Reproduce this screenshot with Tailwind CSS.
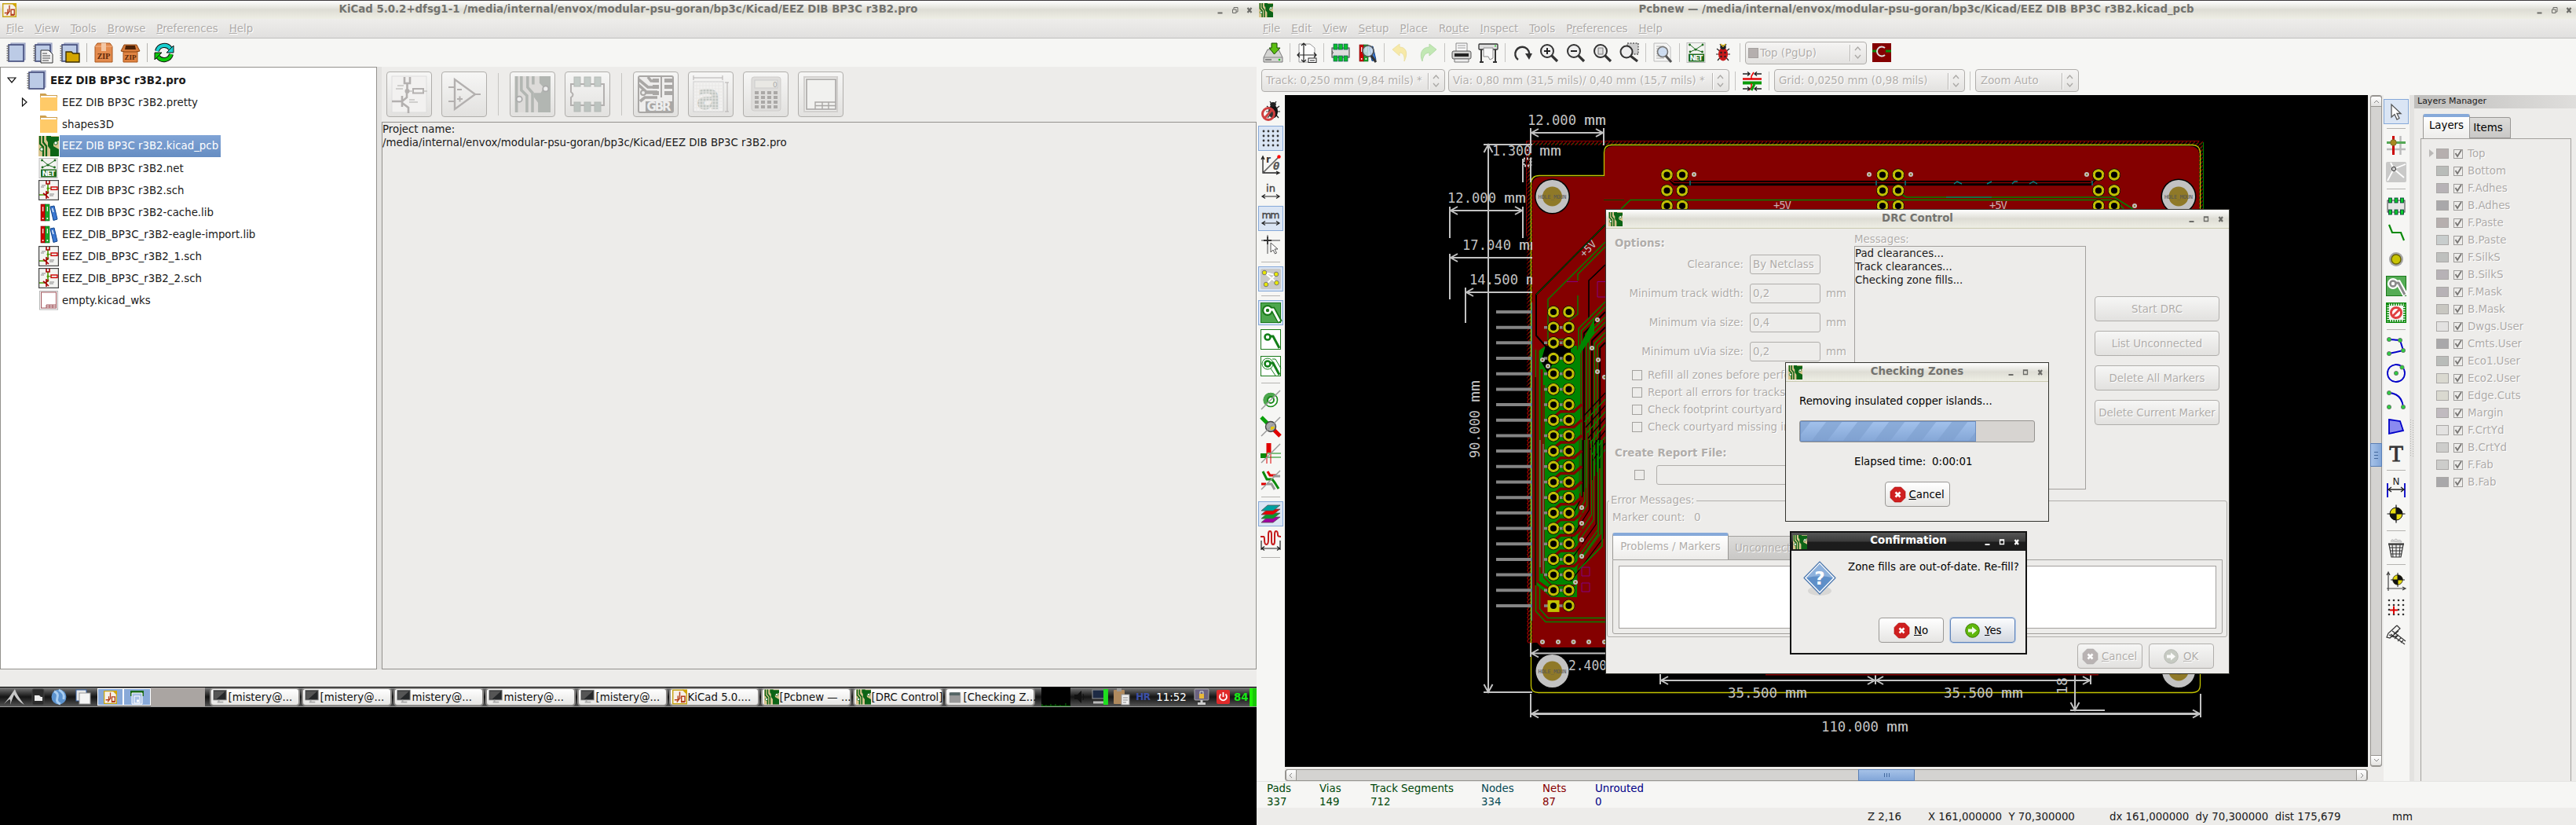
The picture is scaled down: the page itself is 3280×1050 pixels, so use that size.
<!DOCTYPE html>
<html lang="en">
<head>
<meta charset="utf-8">
<title>KiCad desktop</title>
<script src="https://cdn.jsdelivr.net/npm/@tailwindcss/browser@4"></script>
</head>
<body class="bg-black w-[3280px] h-[1050px] overflow-hidden relative whitespace-nowrap font-['DejaVu_Sans','Liberation_Sans',sans-serif] text-[13.33px] leading-[17px] text-[#1a1a1a]">
<div class="flex w-[3280px] h-[1050px]">

<!-- Project manager window and taskbar -->
<section class="w-[1600px] h-[900px] flex flex-col bg-[#edecea]">
  <header class="h-[24px] shrink-0 border-t border-[#3d393c] bg-linear-to-b from-white via-[#deddd5] to-[#eeeee4] flex items-center pl-[3px] relative">
    <i data-i="kicad" class="w-[18px] h-[18px] block"></i>
    <b class="absolute inset-x-0 text-center text-[#73736f] top-[2px]">KiCad 5.0.2+dfsg1-1 /media/internal/envox/modular-psu-goran/bp3c/Kicad/EEZ DIB BP3C r3B2.pro</b>
    <i data-i="wbmax" class="ml-auto w-[50px] h-[14px] mr-[3px] block text-[#6c6c68]"></i>
  </header>
  <nav class="h-[25px] shrink-0 bg-linear-to-b from-[#eeedeb] to-[#e1e0df] border-b border-[#c0bfbd] flex items-center gap-[14px] pl-[8px] text-[#aeaba9] [text-shadow:1px_1px_0_#fff]">
    <span><u>F</u>ile</span><span><u>V</u>iew</span><span><u>T</u>ools</span><span><u>B</u>rowse</span><span><u>P</u>references</span><span><u>H</u>elp</span>
  </nav>
  <div class="h-[36px] shrink-0 bg-[#f6f6f4] flex items-center pl-[4px]">
    <i data-i="book" class="block w-[26px] h-[26px] mx-[4px]"></i><i data-i="bookdoc" class="block w-[26px] h-[26px] mx-[4px]"></i><i data-i="bookfold" class="block w-[26px] h-[26px] mx-[4px]"></i>
    <i class="block w-px h-[24px] mx-[4px] bg-[#b5b4b1]"></i>
    <i data-i="zip" class="block w-[26px] h-[26px] mx-[4px]"></i><i data-i="unzip" class="block w-[26px] h-[26px] mx-[4px]"></i>
    <i class="block w-px h-[24px] mx-[4px] bg-[#b5b4b1]"></i>
    <i data-i="refresh" class="block w-[26px] h-[26px] mx-[4px]"></i>
  </div>
  <div class="h-[767px] flex shrink-0">
    <div id="tree" class="w-[480px] border border-[#93918d] bg-white pt-[2px]"></div>
    <div class="w-[6px] bg-[#e3e2e0]"></div>
    <div class="grow flex flex-col">
      <div class="h-[70px] flex items-center pl-[6px] gap-[12px] text-[#b2aeae]">
        <div class="w-[58px] h-[58px] border border-[#b0aeab] rounded-[4px] bg-linear-to-b from-[#f6f6f5] to-[#e2e1df] flex items-center justify-center"><i data-i="gsch" class="block w-[48px] h-[48px]"></i></div>
        <div class="w-[58px] h-[58px] border border-[#b0aeab] rounded-[4px] bg-linear-to-b from-[#f6f6f5] to-[#e2e1df] flex items-center justify-center"><i data-i="gamp" class="block w-[48px] h-[48px]"></i></div>
        <div class="w-px h-[54px] bg-[#c6c5c2] mx-[2px]"></div>
        <div class="w-[58px] h-[58px] border border-[#b0aeab] rounded-[4px] bg-linear-to-b from-[#f6f6f5] to-[#e2e1df] flex items-center justify-center"><i data-i="gpcb" class="block w-[48px] h-[48px]"></i></div>
        <div class="w-[58px] h-[58px] border border-[#b0aeab] rounded-[4px] bg-linear-to-b from-[#f6f6f5] to-[#e2e1df] flex items-center justify-center"><i data-i="gmod" class="block w-[48px] h-[48px]"></i></div>
        <div class="w-px h-[54px] bg-[#c6c5c2] mx-[2px]"></div>
        <div class="w-[58px] h-[58px] border border-[#b0aeab] rounded-[4px] bg-linear-to-b from-[#f6f6f5] to-[#e2e1df] flex items-center justify-center"><i data-i="ggbr" class="block w-[48px] h-[48px]"></i></div>
        <div class="w-[58px] h-[58px] border border-[#b0aeab] rounded-[4px] bg-linear-to-b from-[#f6f6f5] to-[#e2e1df] flex items-center justify-center"><i data-i="ga" class="block w-[48px] h-[48px]"></i></div>
        <div class="w-[58px] h-[58px] border border-[#b0aeab] rounded-[4px] bg-linear-to-b from-[#f6f6f5] to-[#e2e1df] flex items-center justify-center"><i data-i="gcalc" class="block w-[48px] h-[48px]"></i></div>
        <div class="w-[58px] h-[58px] border border-[#b0aeab] rounded-[4px] bg-linear-to-b from-[#f6f6f5] to-[#e2e1df] flex items-center justify-center"><i data-i="gpage" class="block w-[48px] h-[48px]"></i></div>
      </div>
      <div class="grow border border-[#93918d]"><div>Project name:</div><div>/media/internal/envox/modular-psu-goran/bp3c/Kicad/EEZ DIB BP3C r3B2.pro</div></div>
    </div>
  </div>
  <div class="h-[22px] shrink-0"></div>
  <footer class="h-[26px] shrink-0 border-t border-black bg-linear-to-b from-[#7b7b7b] via-[#151515] to-[#555] flex items-center border-b border-b-[#999]">
    <i data-i="lx" class="block w-[28px] h-[22px] ml-[4px]"></i><i data-i="fm" class="block w-[17px] h-[22px] ml-[8px]"></i><i data-i="globe" class="block w-[20px] h-[22px] ml-[8px]"></i><i data-i="wins" class="block w-[20px] h-[20px] ml-[11px]"></i>
    <div class="w-[33px] h-[22px] ml-[8px] bg-[#88a9d8] border border-white flex justify-center items-center"><i data-i="kicad" class="block w-[17px] h-[17px]"></i></div>
    <div class="w-[35px] h-[22px] bg-[#88a9d8] border border-white flex justify-center items-center"><i data-i="desk" class="block w-[17px] h-[19px]"></i></div>
    <div class="w-[69px] h-[24px] bg-[#aaa5a2]"></div>
    <div id="tasks" class="flex gap-[2px] ml-[6px]"></div>
    <i data-i="graph" class="block w-[37px] h-[24px] ml-[8px]"></i><i data-i="spk" class="block w-[14px] h-[20px] ml-[5px]"></i><i data-i="mon" class="block w-[22px] h-[22px] ml-[9px]"></i><i data-i="clip" class="block w-[22px] h-[22px] ml-[5px]"></i>
    <b class="text-[#3c50a8] ml-[7px] w-[26px] text-[12px] tracking-[-0.5px]">HR</b><span class="text-white w-[48px]">11:52</span>
    <i data-i="lock" class="block w-[20px] h-[22px]"></i><i data-i="power" class="block w-[17px] h-[18px] ml-[9px]"></i><b class="text-[#17e817] ml-[5px] w-[20px]">84</b><i class="block w-[4px] h-[23px] bg-[#1fef07]"></i><i class="block w-[5px] h-[23px] bg-[#1bc80a]"></i>
  </footer>
</section>

<!-- PCB editor window -->
<section class="w-[1680px] h-[1050px] flex flex-col bg-[#f6f6f4] relative">
  <header class="h-[24px] shrink-0 border-t border-[#3d393c] bg-linear-to-b from-white via-[#deddd5] to-[#eeeee4] flex items-center pl-[3px] relative">
    <i data-i="pcb" class="w-[18px] h-[18px] block"></i>
    <b class="absolute inset-x-0 text-center text-[#73736f] top-[2px]">Pcbnew — /media/internal/envox/modular-psu-goran/bp3c/Kicad/EEZ DIB BP3C r3B2.kicad_pcb</b>
    <i data-i="wbmax" class="ml-auto w-[50px] h-[14px] mr-[3px] block text-[#6c6c68]"></i>
  </header>
  <nav class="h-[25px] shrink-0 bg-linear-to-b from-[#eeedeb] to-[#e1e0df] border-b border-[#c0bfbd] flex items-center gap-[14px] pl-[8px] text-[#aeaba9] [text-shadow:1px_1px_0_#fff]">
    <span><u>F</u>ile</span><span><u>E</u>dit</span><span><u>V</u>iew</span><span><u>S</u>etup</span><span><u>P</u>lace</span><span>Ro<u>u</u>te</span><span><u>I</u>nspect</span><span><u>T</u>ools</span><span>P<u>r</u>eferences</span><span><u>H</u>elp</span>
  </nav>
  <div class="h-[36px] shrink-0 flex items-center pl-[4px]">
    <div id="tb1" class="flex items-center"></div>
    <div class="ml-[2px] w-[155px] h-[29px] border border-[#b0aeab] rounded-[4px] bg-linear-to-b from-[#f5f4f3] to-[#e3e2e0] flex items-center text-[#b2afac] [text-shadow:1px_1px_0_#fff]"><i class="block w-[13px] h-[13px] ml-[3px] bg-[#b5afae] border border-[#a5a19f]"></i><span class="ml-[2px]">Top (PgUp)</span><i data-i="combo" class="ml-auto block w-[22px] h-[24px]"></i></div>
    <i data-i="pair" class="block w-[24px] h-[24px] ml-[7px]"></i>
  </div>
  <div class="h-[36px] shrink-0 flex items-center pl-[6px] pb-px text-[#b2afac] [text-shadow:1px_1px_0_#fff]">
    <div class="w-[234px] h-[29px] border border-[#b0aeab] rounded-[4px] bg-linear-to-b from-[#f5f4f3] to-[#e3e2e0] flex items-center pl-[5px]"><span>Track: 0,250 mm (9,84 mils) *</span><i data-i="combo" class="ml-auto block w-[22px] h-[24px]"></i></div>
    <div class="ml-[4px] w-[358px] h-[29px] border border-[#b0aeab] rounded-[4px] bg-linear-to-b from-[#f5f4f3] to-[#e3e2e0] flex items-center pl-[5px]"><span>Via: 0,80 mm (31,5 mils)/ 0,40 mm (15,7 mils) *</span><i data-i="combo" class="ml-auto block w-[22px] h-[24px]"></i></div>
    <i class="block w-px h-[24px] ml-[7px] bg-[#c5c4c1]"></i><i data-i="clear" class="block w-[26px] h-[26px] mx-[8px]"></i><i class="block w-px h-[24px] bg-[#c5c4c1]"></i>
    <div class="ml-[6px] w-[243px] h-[29px] border border-[#b0aeab] rounded-[4px] bg-linear-to-b from-[#f5f4f3] to-[#e3e2e0] flex items-center pl-[5px]"><span>Grid: 0,0250 mm (0,98 mils)</span><i data-i="combo" class="ml-auto block w-[22px] h-[24px]"></i></div>
    <i class="block w-px h-[24px] ml-[6px] bg-[#c5c4c1]"></i>
    <div class="ml-[6px] w-[132px] h-[29px] border border-[#b0aeab] rounded-[4px] bg-linear-to-b from-[#f5f4f3] to-[#e3e2e0] flex items-center pl-[6px]"><span>Zoom Auto</span><i data-i="combo" class="ml-auto block w-[22px] h-[24px]"></i></div>
  </div>
  <div class="h-[873px] shrink-0 flex">
    <div id="tbl" class="w-[36px] flex flex-col items-center pt-[4px]"></div>
    <div class="w-[1399px] bg-[#edecea]">
      <div class="flex h-[855px]">
        <svg id="board" class="block w-[1379px] h-[855px] bg-black" viewBox="1636 121 1379 855"></svg>
        <div class="w-[15px] ml-[3px] border border-[#969490] rounded-[3px] bg-[#d4d3d1] flex flex-col items-center">
          <div class="w-[15px] h-[14px] border border-[#969490] rounded-t-[3px] bg-linear-to-b from-white to-[#e3e2e0] flex items-center justify-center"><i data-i="up" class="block w-[8px] h-[8px]"></i></div>
          <div class="w-[15px] h-[30px] mt-[428px] border border-[#5a7fb5] bg-linear-to-r from-[#a6c2e8] to-[#82a6d8] flex flex-col items-center justify-center gap-[3px]"><i class="block w-[5px] h-px bg-[#456a9f]"></i><i class="block w-[5px] h-px bg-[#456a9f]"></i><i class="block w-[5px] h-px bg-[#456a9f]"></i></div>
          <div class="mt-auto w-[15px] h-[14px] border border-[#969490] rounded-b-[3px] bg-linear-to-b from-white to-[#e3e2e0] flex items-center justify-center"><i data-i="dn" class="block w-[8px] h-[8px]"></i></div>
        </div>
      </div>
      <div class="mt-[3px] w-[1379px] h-[15px] border border-[#969490] rounded-[3px] bg-[#d4d3d1] flex items-center">
        <div class="w-[14px] h-[15px] border border-[#969490] rounded-l-[3px] bg-linear-to-b from-white to-[#e3e2e0] flex items-center justify-center"><i data-i="lt" class="block w-[8px] h-[8px]"></i></div>
        <div class="w-[72px] h-[15px] ml-[715px] border border-[#5a7fb5] bg-linear-to-b from-[#a6c2e8] to-[#82a6d8] flex items-center justify-center gap-[2px]"><i class="block w-px h-[5px] bg-[#456a9f]"></i><i class="block w-px h-[5px] bg-[#456a9f]"></i><i class="block w-px h-[5px] bg-[#456a9f]"></i></div>
        <div class="ml-auto w-[14px] h-[15px] border border-[#969490] rounded-r-[3px] bg-linear-to-b from-white to-[#e3e2e0] flex items-center justify-center"><i data-i="rt" class="block w-[8px] h-[8px]"></i></div>
      </div>
    </div>
    <div id="tbr" class="w-[34px] flex flex-col items-center pt-[4px] -ml-px"></div>
    <div class="w-[6px] bg-[#e3e2e0] flex items-center pl-px"><i data-i="grip" class="block w-[5px] h-[47px]"></i></div>
    <div class="grow bg-[#edecea] ">
      <div class="h-[17px] bg-linear-to-r from-[#bfbebc] to-[#dfdedc] pl-[4px] text-[11px] leading-[15px]">Layers Manager</div>
      <div class="pl-[8px] mt-[7px]">
        <div class="flex items-end h-[31px] pl-[3px]">
          <div class="w-[60px] h-[31px] border border-b-0 border-[#9a9895] border-t-4 border-t-[#86a9d9] rounded-t-[3px] bg-linear-to-b from-white to-[#edecea] text-center pt-[2px] text-black">Layers</div>
          <div class="w-[52px] h-[27px] border border-l-0 border-[#9a9895] rounded-tr-[3px] bg-linear-to-b from-[#dddcda] to-[#c9c8c6] text-center pt-[4px] pr-[5px] text-black">Items</div>
        </div>
        <div id="layers" class="w-[192px] h-[818px] border border-b-0 border-[#a3a19e] pt-[7px] pl-[13px] text-[#aeaba9] [text-shadow:1px_1px_0_#fff]"></div>
      </div>
    </div>
  </div>
  <div class="h-[34px] shrink-0 border-t border-[#e4e4e2] flex">
    <div class="pl-[13px] w-[80px] text-[#00480a]"><div>Pads</div><div>337</div></div>
    <div class="w-[65px] text-[#00480a]"><div>Vias</div><div>149</div></div>
    <div class="w-[141px] text-[#00480a]"><div>Track Segments</div><div>712</div></div>
    <div class="w-[78px] text-[#064a55]"><div>Nodes</div><div>334</div></div>
    <div class="w-[67px] text-[#860000]"><div>Nets</div><div>87</div></div>
    <div class="text-[#000086]"><div>Unrouted</div><div>0</div></div>
  </div>
  <div class="grow bg-[#edecea] flex items-center pl-[778px]">
    <span class="w-[77px]">Z 2,16</span><span class="w-[231px]">X 161,000000&nbsp; Y 70,300000</span><span class="w-[360px]">dx 161,000000&nbsp; dy 70,300000&nbsp; dist 175,679</span><span>mm</span>
  </div>
</section>
</div>

<!-- DRC dialog -->
<section class="absolute left-[2044px] top-[266px] w-[795px] h-[592px] border border-[#34342f] bg-[#edecea] text-[#b0adaa] [text-shadow:1px_1px_0_#fff] flex flex-col">
  <header class="h-[24px] shrink-0 border-b border-[#c9c9af] bg-linear-to-b from-white via-[#deddd5] to-[#eeeee4] flex items-center pl-[3px] relative [text-shadow:none]">
    <i data-i="pcb" class="w-[18px] h-[18px] block"></i><b class="absolute inset-x-0 text-center text-[#73736f] top-[2px]">DRC Control</b><i data-i="wb" class="ml-auto w-[50px] h-[14px] mr-[4px] block text-[#6c6c68]"></i>
  </header>
  <div class="flex h-[332px] shrink-0">
    <div class="w-[316px] pt-[10px] pl-[11px] shrink-0">
      <b class="block h-[17px]">Options:</b>
      <div class="h-[37px] flex items-center"><span class="w-[164px] text-right">Clearance:</span><div class="ml-[8px] w-[90px] h-[25px] border border-[#b0aeab] rounded-[3px] pl-[3px] pt-[3px]">By Netclass</div></div>
      <div class="h-[37px] flex items-center"><span class="w-[164px] text-right">Minimum track width:</span><div class="ml-[8px] w-[90px] h-[25px] border border-[#b0aeab] rounded-[3px] pl-[3px] pt-[3px]">0,2</div><span class="ml-[7px]">mm</span></div>
      <div class="h-[37px] flex items-center"><span class="w-[164px] text-right">Minimum via size:</span><div class="ml-[8px] w-[90px] h-[25px] border border-[#b0aeab] rounded-[3px] pl-[3px] pt-[3px]">0,4</div><span class="ml-[7px]">mm</span></div>
      <div class="h-[37px] flex items-center"><span class="w-[164px] text-right">Minimum uVia size:</span><div class="ml-[8px] w-[90px] h-[25px] border border-[#b0aeab] rounded-[3px] pl-[3px] pt-[3px]">0,2</div><span class="ml-[7px]">mm</span></div>
      <div class="h-[22px] flex items-center pl-[22px] gap-[7px]"><i class="block w-[13px] h-[13px] border border-[#a3a19e]"></i><span>Refill all zones before performing</span></div>
      <div class="h-[22px] flex items-center pl-[22px] gap-[7px]"><i class="block w-[13px] h-[13px] border border-[#a3a19e]"></i><span>Report all errors for tracks (slow)</span></div>
      <div class="h-[22px] flex items-center pl-[22px] gap-[7px]"><i class="block w-[13px] h-[13px] border border-[#a3a19e]"></i><span>Check footprint courtyard overlap</span></div>
      <div class="h-[22px] flex items-center pl-[22px] gap-[7px]"><i class="block w-[13px] h-[13px] border border-[#a3a19e]"></i><span>Check courtyard missing in fp</span></div>
      <b class="block h-[17px] mt-[14px]">Create Report File:</b>
      <div class="flex items-center h-[25px] mt-[7px] pl-[25px]"><i class="block w-[13px] h-[13px] border border-[#a3a19e]"></i><div class="ml-[15px] w-[220px] h-[25px] border border-[#b0aeab] rounded-[3px]"></div></div>
    </div>
    <div class="w-[295px] pt-[5px] shrink-0"><div>Messages:</div>
      <div class="w-[295px] h-[310px] border border-[#a3a19e] text-[#1a1a1a] [text-shadow:none]"><div>Pad clearances...</div><div>Track clearances...</div><div>Checking zone fills...</div></div></div>
    <div class="pt-[86px] pl-[11px] flex flex-col gap-[12px]">
      <div class="w-[159px] h-[32px] border border-[#b0aeab] rounded-[4px] bg-linear-to-b from-[#f6f6f5] to-[#e2e1df] text-center pt-[7px]">Start DRC</div>
      <div class="w-[159px] h-[32px] border border-[#b0aeab] rounded-[4px] bg-linear-to-b from-[#f6f6f5] to-[#e2e1df] text-center pt-[7px]">List Unconnected</div>
      <div class="w-[159px] h-[32px] border border-[#b0aeab] rounded-[4px] bg-linear-to-b from-[#f6f6f5] to-[#e2e1df] text-center pt-[7px]">Delete All Markers</div>
      <div class="w-[159px] h-[32px] border border-[#b0aeab] rounded-[4px] bg-linear-to-b from-[#f6f6f5] to-[#e2e1df] text-center pt-[7px]">Delete Current Marker</div>
    </div>
  </div>
  <div class="mt-[14px] ml-[1px] w-[790px] h-[174px] border border-[#b0aeab] rounded-[3px] shrink-0 relative pl-[6px]">
    <div class="absolute left-[2px] top-[-10px] bg-[#edecea] px-[2px]">Error Messages:</div>
    <div class="mt-[12px] h-[17px] flex"><span class="w-[104px]">Marker count:</span><span>0</span></div>
    <div class="flex items-end h-[34px] mt-[11px]">
      <div class="w-[148px] h-[34px] border border-b-0 border-[#9a9895] border-t-4 border-t-[#86a9d9] rounded-t-[3px] bg-linear-to-b from-white to-[#edecea] text-center pt-[5px]">Problems / Markers</div>
      <div class="w-[200px] h-[30px] border border-l-0 border-b-0 border-[#a3a19e] bg-linear-to-b from-[#dddcda] to-[#c9c8c6] pl-[8px] pt-[6px]">Unconnected Items</div>
    </div>
    <div class="w-[777px] h-[95px] border border-[#a3a19e] rounded-b-[3px] p-[7px]"><div class="w-full h-[80px] border border-[#a3a19e] bg-white"></div></div>
  </div>
  <div class="flex justify-end gap-[8px] mt-[8px] pr-[19px]">
    <div class="w-[83px] h-[32px] border border-[#b0aeab] rounded-[4px] bg-linear-to-b from-[#f6f6f5] to-[#e2e1df] flex items-center pl-[5px] gap-[4px]"><i data-i="gno" class="block w-[21px] h-[21px]"></i><span><u>C</u>ancel</span></div>
    <div class="w-[83px] h-[32px] border border-[#b0aeab] rounded-[4px] bg-linear-to-b from-[#f6f6f5] to-[#e2e1df] flex items-center pl-[17px] gap-[5px]"><i data-i="gok" class="block w-[21px] h-[21px]"></i><span><u>O</u>K</span></div>
  </div>
</section>

<!-- Progress dialog -->
<section class="absolute left-[2273px] top-[461px] w-[336px] h-[203px] border border-[#34342f] bg-[#edecea] flex flex-col">
  <header class="h-[24px] shrink-0 border-b border-[#c9c9af] bg-linear-to-b from-white via-[#deddd5] to-[#eeeee4] flex items-center pl-[3px] relative">
    <i data-i="pcb" class="w-[18px] h-[18px] block"></i><b class="absolute inset-x-0 text-center text-[#73736f] top-[2px]">Checking Zones</b><i data-i="wb" class="ml-auto w-[50px] h-[14px] mr-[4px] block text-[#6c6c68]"></i>
  </header>
  <div class="pl-[17px] pt-[16px] text-black">Removing insulated copper islands...</div>
  <div class="ml-[17px] mt-[16px] w-[300px] h-[28px] border border-[#95938f] rounded-[3px] bg-[#d7d4d1]"><i data-i="prog" class="block w-[224px] h-[26px]"></i></div>
  <div class="pl-[87px] mt-[16px] text-black flex"><span class="w-[99px]">Elapsed time:</span><span>0:00:01</span></div>
  <div class="mx-auto mt-[17px] w-[83px] h-[32px] border border-[#9a9895] rounded-[4px] bg-linear-to-b from-white to-[#e6e5e3] flex items-center pl-[5px] gap-[4px] text-black"><i data-i="no" class="block w-[21px] h-[21px]"></i><span><u>C</u>ancel</span></div>
</section>

<!-- Confirmation dialog -->
<section class="absolute left-[2279px] top-[676px] w-[302px] h-[157px] border-2 border-[#141414] bg-[#edecea] flex flex-col">
  <header class="h-[23px] shrink-0 bg-linear-to-b from-[#565656] from-0% via-[#3a3a3a] via-49% to-[#1c1c1c] to-51% flex items-center pl-[2px] relative">
    <i data-i="pcb" class="w-[18px] h-[18px] block"></i><b class="absolute inset-x-0 text-center text-white top-[1px]">Confirmation</b><i data-i="wb" class="ml-auto w-[50px] h-[14px] mr-[5px] block text-white"></i>
  </header>
  <div class="flex pl-[14px] pt-[12px] text-black"><i data-i="quest" class="block w-[44px] h-[46px]"></i><span class="ml-[14px]">Zone fills are out-of-date. Re-fill?</span></div>
  <div class="flex gap-[8px] pl-[111px] mt-[27px] text-black">
    <div class="w-[83px] h-[32px] border border-[#9a9895] rounded-[4px] bg-linear-to-b from-white to-[#e6e5e3] flex items-center pl-[18px] gap-[5px]"><i data-i="no" class="block w-[21px] h-[21px]"></i><span><u>N</u>o</span></div>
    <div class="w-[83px] h-[32px] border border-[#5f83b8] rounded-[4px] bg-linear-to-b from-[#fbfcfe] to-[#d3d8e0] ring-1 ring-[#b9cdea] flex items-center pl-[17px] gap-[5px]"><i data-i="yes" class="block w-[21px] h-[21px]"></i><span><u>Y</u>es</span></div>
  </div>
</section>

<script>
const svg=(w,h,s)=>`<svg class="block w-full h-full not-italic overflow-visible" viewBox="0 0 ${w} ${h}" fill="none">${s}</svg>`;
const S26=s=>svg(26,26,s);
const lens=(x,y,r)=>`<circle cx="${x}" cy="${y}" r="${r}" fill="#eee" stroke="#333" stroke-width="2"/><path d="M${x+r*.7} ${y+r*.7}L24 24" stroke="#333" stroke-width="3.2"/>`;
const book=`<rect x="6" y="1" width="18" height="21" fill="#c9d3e8" stroke="#8b93b8"/><rect x="3" y="3" width="19" height="21" fill="#bccbe6" stroke="#3f4878" stroke-width="1.6"/><path d="M2 4v20" stroke="#777" stroke-width="3" stroke-dasharray="1.6 1.4"/>`;
const chip=(c,f)=>`<rect x="2" y="7" width="22" height="12" fill="${f}" stroke="#555" stroke-width="1.2"/><path d="M2 11q3 2 0 4" stroke="#555"/>`+[4,10.5,17].map(x=>`<rect x="${x}" y="2" width="5" height="7" fill="${c}" stroke="#155" stroke-width=".7"/><rect x="${x}" y="17" width="5" height="7" fill="${c}" stroke="#155" stroke-width=".7"/>`).join('');
const pcb=(a,b)=>`<rect width="26" height="26" fill="${a}"/><path d="M16 1H26V6L19 9V13L26 17V26H15V17L12 13V8L10 5V0H16Z" fill="${b}"/><path d="M2 0V10L6 14V26M6 0V8L10 13V26" stroke="${b}" stroke-width="2.2"/><circle cx="22" cy="9" r="2.2" fill="#fff" stroke="${b}"/><circle cx="4" cy="17" r="2.2" fill="#fff" stroke="${b}"/>`;
const sch=`<rect x=".6" y=".6" width="24.8" height="24.8" fill="#f4f4f2" stroke="#444" stroke-width="1.2"/><path d="M1 19H9M12 5V18" stroke="#4b9a06" stroke-width="1.6"/><path d="M10 1V5H14V1M10 14V24M10 20L6 17M10 18L13 15M10 20L13 23" stroke="#a40000" stroke-width="1.6"/><rect x="16" y="9" width="8" height="3.4" stroke="#c00" stroke-width="1.4"/><path d="M12 10.700h4" stroke="#4b9a06"/><path d="M4 7h5M3 9h4M14 18h6M14 20h5" stroke="#888"/><circle cx="12" cy="10.700" r="1.500" fill="#4b9a06"/>`;
const lib=`<rect x="3" y="3" width="5.500" height="21" fill="#c00" stroke="#700" stroke-width=".6"/><rect x="8.500" y="3" width="5.500" height="21" fill="#19a52c" stroke="#0a5a14" stroke-width=".6"/><path d="M15 6L20 5L24 22L19 23.500Z" fill="#3a77d2" stroke="#124488"/><path d="M5.700 6v6M11.300 6v6M17.500 8l1.500 5" stroke="#fff" stroke-width="1.200"/><circle cx="5.700" cy="21" r="1" fill="#fff"/><circle cx="11.300" cy="21" r="1" fill="#fff"/>`;
const net=`<rect x="1" y="0.500" width="23" height="25" fill="#f3f3f1" stroke="#bbb"/><path d="M5 3L12 9L21 3M5 12L12 9L20 12" stroke="#1d6b1d"/><g fill="#1d6b1d"><circle cx="4.500" cy="3" r="1.400"/><circle cx="21" cy="3" r="1.400"/><circle cx="12" cy="9" r="1.600"/><circle cx="5" cy="12" r="1.400"/><circle cx="20.500" cy="12" r="1.400"/><rect x="3" y="14.500" width="20" height="10"/></g><text x="13" y="23" font-size="9" font-weight="bold" text-anchor="middle" fill="#fff" textLength="17">NET</text>`;
const slash='<path d="M1 25L25 1" stroke="#999" stroke-width="1.400"/>';
const dot=(x,y)=>`<circle cx="${x}" cy="${y}" r="2.600" fill="#2ecc40" stroke="#666" stroke-width=".8"/>`;
const pad=(bg,s,extra='')=>`<rect x=".5" y=".5" width="25" height="25" fill="${bg}" stroke="#1a7a1a"/>${extra}<circle cx="9" cy="10" r="3.500" stroke="${s}" stroke-width="2.600"/><path d="M12 9h4l8 15" stroke="${s}" stroke-width="3"/>`;
const stop=(a,b)=>`<path d="M6.500 1H14.500L20 6.500V14.500L14.500 20H6.500L1 14.500V6.500Z" fill="${a}" stroke="${b}" stroke-width=".6"/><path d="M7.500 7.500L13.500 13.500M13.500 7.500L7.500 13.500" stroke="#fff" stroke-width="2.600"/>`;
const go=(a,b)=>`<circle cx="10.500" cy="10.500" r="8.800" fill="${a}" stroke="${b}"/><path d="M5 8.500h5V5.500l6 5-6 5V12.500H5z" fill="#fff" fill-opacity=".9"/>`;
const ori=(dx,dy,k)=>`<g transform="translate(${dx} ${dy}) scale(${k})"><circle r="8" fill="#e6dc10" stroke="#111"/><path d="M0 0V-8A8 8 0 0 1 8 0ZM0 0V8A8 8 0 0 1 -8 0Z" fill="#111"/><path d="M-11.500 0H11.500M0 -11.500V11.500" stroke="#111" stroke-width="1.200"/></g>`;
const G='#b3b0af';
const bug=c=>`<path d="M5 8l5 4M21 8l-5 4M4 15h18M6 23l5-6M20 23l-5-6M9 2l3 5M17 2l-3 5" stroke="#222" stroke-width="1.200"/><ellipse cx="13" cy="15" rx="6" ry="8.500" fill="${c}"/><ellipse cx="13" cy="6" rx="3.800" ry="3" fill="#222"/>`;
const I={
kicad:S26(`<path d="M1 1H19L25 7V25H1Z" fill="#f7f1e8" stroke="#c8a415" stroke-width="2"/><path d="M18 0H26V8Z" fill="#d3a500"/><path d="M4 18H10V11M8 22l6-8M13 4v12M16 12h6v9h-6zM15 22h7" stroke="#b5401c" stroke-width="2"/>`),
pcb:S26(pcb('#d9c48f','#0c6416')),sch:S26(sch),lib:S26(lib),net:S26(net),
folder:S26(`<path d="M2 2H9L11 4H24V8H2Z" fill="#cfa04f"/><rect x="3" y="5" width="20" height="4" fill="#fff"/><rect x="2" y="7" width="22" height="17" fill="#ffca68"/>`),
wks:S26(`<rect x="1.500" y="1.500" width="23" height="23.500" fill="#fff" stroke="#b5b5b5"/><rect x="3.500" y="3" width="19" height="20" stroke="#a0545a"/><path d="M10 19h12.500M10 23v-4M14 19v4M18 19v4M10 21h12" stroke="#a0545a"/>`),
book:S26(book),bookdoc:S26(book+`<path d="M10 10H20L25 15V26H10Z" fill="#f5f5f5" stroke="#333"/><path d="M12 14h6M12 17h10M12 20h10M12 23h8" stroke="#444"/>`),
bookfold:S26(book+`<path d="M8 12h7l2 2h8v11H8z" fill="#d3a500" stroke="#3b2e00" stroke-width="1.400"/>`),
zip:S26(`<path d="M2 5L5 1H21L24 5V25H2Z" fill="#e38b4e" stroke="#a9571d"/><path d="M2 5h22" stroke="#f3b68b"/><rect x="10" y="1" width="6" height="10" fill="#f3c7a5"/><text x="13" y="21" font-size="10" font-weight="bold" font-family="Liberation Serif" fill="#5c2707" text-anchor="middle">ZIP</text>`),
unzip:S26(`<path d="M4 10H22V25H4Z" fill="#e08443" stroke="#a9571d"/><path d="M5 3H21L25 11L20 12H6L1 11Z" fill="#d97c3a" stroke="#8b4513"/><path d="M7 4H19L20 9H6Z" fill="#4a2208"/><text x="13" y="22" font-size="9" font-weight="bold" font-family="Liberation Serif" fill="#5c2707" text-anchor="middle">ZIP</text>`),
refresh:S26(`<path d="M4 11A9.500 9.500 0 0 1 21 8" stroke="#111" stroke-width="6"/><path d="M4 11A9.500 9.500 0 0 1 21 8" stroke="#19cfd0" stroke-width="4"/><path d="M25 4V13H16Z" fill="#19cfd0" stroke="#111"/><path d="M22 15A9.500 9.500 0 0 1 5 18" stroke="#111" stroke-width="6"/><path d="M22 15A9.500 9.500 0 0 1 5 18" stroke="#0cc80c" stroke-width="4"/><path d="M1 22V13H10Z" fill="#0cc80c" stroke="#111"/>`),
gsch:svg(48,48,`<rect x="2" y="1" width="44" height="46" fill="#f2f1f0" stroke="#ddd"/><path d="M18 2v8h7V2M21.500 10v12M21 20v8l-6 5v-6M15 26v14M2 33h12M15 35l8 6v7" stroke="${G}" stroke-width="2.600"/><rect x="29" y="17" width="13" height="5.500" stroke="${G}" stroke-width="2"/><path d="M22 20h7M42 20h5M9 13h8M7 17h9M24 31h7M24 34h11" stroke="#c5c3c1" stroke-width="1.600"/><circle cx="21.500" cy="20" r="3" fill="${G}"/>`),
gamp:svg(48,48,`<path d="M12 5V43L38 24Z" stroke="${G}" stroke-width="2.400"/><path d="M4 15h8M4 33h8M38 24h7M15 18h6M15 30h7M18.500 26.500v7" stroke="${G}" stroke-width="2"/>`),
gpcb:svg(48,48,`<g transform="translate(1 1) scale(1.770)"><rect width="26" height="26" fill="#dddbd9"/><path d="M18 0H26V26H17V19L14 15V12H19L21 8L18 5Z" fill="#b2b6b2"/><path d="M1.500 0V26M5 0V10L9 14V26M9.500 0V8L13 12V26M13.500 0V6" stroke="#b2b6b2" stroke-width="2"/><circle cx="22.500" cy="9" r="2" fill="#eee" stroke="#aaa"/><circle cx="3.500" cy="16.500" r="2" fill="#eee" stroke="#aaa"/></g>`),
gmod:svg(48,48,`<path d="M3 11H45V38H3V28q5-3 0-7Z" stroke="${G}" stroke-width="2"/>`+[7,20,33].map(x=>`<rect x="${x}" y="2" width="8" height="12" fill="#c3cbc7" stroke="#b5b9b6"/><rect x="${x}" y="34" width="8" height="12" fill="#bcc3bf" stroke="#b5b9b6"/>`).join('')),
ggbr:svg(48,48,`<rect x="2" y="1" width="44" height="46" rx="2" fill="#eeedec" stroke="#a9a7a5" stroke-width="2"/><path d="M2 5l12 10h12M2 12l10 9h14M8 22h20M4 33l6-5h16M14 2l4 5h8" stroke="#a9a7a5" stroke-width="3.600"/><circle cx="8" cy="22" r="3" fill="#eee" stroke="#a9a7a5" stroke-width="2"/><path d="M31 2v26" stroke="#a9a7a5" stroke-width="2"/><g fill="#a9a7a5"><rect x="20" y="4" width="8" height="5"/><rect x="20" y="12" width="8" height="5"/><rect x="20" y="20" width="8" height="5"/><rect x="35" y="4" width="10" height="5"/><rect x="35" y="12" width="10" height="5"/><rect x="35" y="20" width="10" height="5"/><rect x="11" y="33" width="34" height="13"/></g><text x="28" y="45" font-size="15" font-weight="bold" fill="#eee" text-anchor="middle" textLength="31">GBR</text>`),
ga:svg(48,48,`<rect x="2" y="8" width="38" height="38" fill="#f2f1f0" stroke="#ccc"/><text x="21" y="43" font-size="47" font-weight="bold" fill="#c0c5c1" text-anchor="middle">a</text><path d="M2 13h38M2 17h38M2 21h38M2 25h38M2 29h38M2 33h38M2 37h38M2 41h38M6 8v38M10 8v38M14 8v38M18 8v38M22 8v38M26 8v38M30 8v38M34 8v38" stroke="#e9e8e6"/><path d="M2 3h37M2 0v6M39 0v6M45 9v37M42 9h5M42 46h5" stroke="${G}"/>`),
gcalc:svg(48,48,`<rect x="6" y="2" width="37" height="43" rx="3" fill="#dedddb" stroke="#cfcdcb"/><rect x="10" y="6" width="29" height="10" fill="#e9e8e4" stroke="#ccc"/><text x="33" y="15" font-size="9" fill="#aaa">0</text>`+[0,1,2,3].map(r=>[0,1,2,3].map(c=>`<rect x="${10+c*8}" y="${20+r*6}" width="5" height="4" fill="#aaa8a6"/>`).join('')).join('')),
gpage:svg(48,48,`<rect x="3" y="2" width="42" height="44" fill="#f1f1ef" stroke="#d2d0ce" stroke-width="2"/><rect x="6" y="5" width="37" height="38" stroke="#a9a7a5" stroke-width="1.600"/><path d="M17 43V34H43M17 38.500H43M26 34v9M34 34v9" stroke="#a9a7a5" stroke-width="1.400"/>`),
wbmax:svg(50,14,`<path d="M3.500 10.500h6" stroke="currentColor" stroke-width="2"/><path d="M24 6V3.500h5V9h-2M22.500 6h4.500v4.500h-4.500z" stroke="currentColor"/><path d="M41.500 4l5 6M46.500 4l-5 6" stroke="currentColor" stroke-width="2.200"/>`),
wb:svg(50,14,`<path d="M3.500 10h6" stroke="currentColor" stroke-width="2"/><path d="M22.500 4h5v5.500h-5zM22 4.500h6" stroke="currentColor" stroke-width="1.300"/><path d="M41.500 4l4.500 6M46 4l-4.500 6" stroke="currentColor" stroke-width="2.200"/>`),
combo:svg(22,24,`<path d="M1.500 2v21" stroke="#b8b6b3"/><path d="M2.500 2v21" stroke="#fff"/><path d="M8 9l3.500-4L15 9M8 15l3.500 4L15 15" stroke="#aaa8a5" stroke-width="1.300"/>`),
up:svg(8,8,'<path d="M1 6l3-3 3 3" stroke="#888"/>'),dn:svg(8,8,'<path d="M1 2l3 3 3-3" stroke="#888"/>'),lt:svg(8,8,'<path d="M5 1L2 4l3 3" stroke="#888"/>'),rt:svg(8,8,'<path d="M3 1l3 3-3 3" stroke="#888"/>'),
grip:svg(5,47,'<path d="M.5 0v47M3.500 1v46" stroke="#b5b3b0" stroke-dasharray="1 2"/>'),
save:S26(`<path d="M1 19L6 9H20L25 19V25H1Z" fill="#d4d4d2" stroke="#777"/><path d="M1 19h24" stroke="#888"/><path d="M3 22h8" stroke="#888" stroke-width="2"/><circle cx="21" cy="22" r="1.300" fill="#1c1"/><path d="M11 1H18V7H22L14.500 15L8 7H11Z" fill="#5cbf12" stroke="#164a00"/>`),
page:S26(`<path d="M3 2H17L23 7V25H3Z" fill="#fdfdfd" stroke="#999"/><path d="M9 1v24M1 16h24M6 4l3-3 3 3M6 22l3 3 3-3M4 13l-3 3 3 3M22 13l3 3-3 3" stroke="#222" stroke-width="1.200"/><rect x="15" y="20" width="10" height="5.500" fill="#fff" stroke="#222"/><path d="M17 23h6" stroke="#222"/>`),
chip:S26(chip('#0abf2c','#ddd')),
libfind:S26(lib+`<circle cx="14" cy="11" r="7" fill="#cde" fill-opacity=".85" stroke="#555" stroke-width="1.600"/><path d="M18 17L24 25" stroke="#333" stroke-width="3"/>`),
undo:S26(`<path d="M2 9L11 2V6C20 6 22 14 17 24C18 16 15 13 11 13V17Z" fill="#f7e9a8" stroke="#ece0a0"/>`),redo:S26(`<path d="M24 9L15 2V6C5 6 2 15 6 24C7 16 11 13 15 13V17Z" fill="#c2e8b4" stroke="#b4dba8"/>`),
print:S26(`<path d="M6 1H20V12H6Z" fill="#fafafa" stroke="#888"/><path d="M8 4h10M8 7h10" stroke="#999"/><rect x="1" y="11" width="24" height="10" rx="2" fill="#d0d0ce" stroke="#555"/><rect x="4" y="14" width="18" height="4" fill="#222"/><path d="M4 21H22V25H4Z" fill="#eee" stroke="#777"/>`),
plot:S26(`<rect x="1" y="2" width="24" height="7" rx="1" fill="#ddd" stroke="#333" stroke-width="1.300"/><path d="M4 9V25M22 9V25M2 25h5M19 25h5" stroke="#333" stroke-width="2"/><path d="M7 7H19V20L15 22L13 18H7Z" fill="#f8f8f8" stroke="#888"/><circle cx="22" cy="4.500" r="1" fill="#2c2"/>`),
redraw:S26(`<path d="M8 22A9 9 0 1 1 22 17" stroke="#333" stroke-width="2.400"/><path d="M17 14h9l-4 8z" fill="#333"/>`),
zin:S26(lens(11,11,8)+'<path d="M7 11h8M11 7v8" stroke="#222" stroke-width="2"/>'),zout:S26(lens(11,11,8)+'<path d="M7 11h8" stroke="#222" stroke-width="2"/>'),zfit:S26(lens(11,11,8)+'<rect x="8" y="7" width="6" height="8" fill="#ddd" stroke="#777"/>'),
zsel:S26(`<rect x="11" y="1" width="14" height="14" fill="#ccc" stroke="#222" stroke-dasharray="2 1.500"/>`+lens(10,12,7.500)),
find:S26(`<path d="M2 1H18L23 6V24H2Z" fill="#f5f5f4" stroke="#bbb"/><path d="M5 5h10M5 8h14M5 11h14M5 14h14M5 17h14M5 20h10" stroke="#aaa"/><circle cx="13" cy="12" r="6.500" fill="#cbdcf2" fill-opacity=".9" stroke="#777" stroke-width="1.600"/><path d="M17 17L24 25" stroke="#555" stroke-width="3"/>`),
bug:S26(bug('#c81a1a')+'<circle cx="10.500" cy="13" r="1.200" fill="#222"/><circle cx="15.500" cy="13" r="1.200" fill="#222"/><circle cx="10.500" cy="18" r="1.200" fill="#222"/><circle cx="15.500" cy="18" r="1.200" fill="#222"/><path d="M10 2l3 3 3-3" stroke="#e8c520" stroke-width="1.500"/>'),
pair:svg(24,24,'<rect width="24" height="24" fill="#840000"/><path d="M0 10h7M17 10h7" stroke="#0a8a0a" stroke-width="3"/><path d="M16 6a6 6 0 1 0 0 9" stroke="#ddd" stroke-width="2"/>'),
clear:S26(`<path d="M1 10.500h24" stroke="#e00000" stroke-width="2.400"/><path d="M1 15.500h24" stroke="#0a9a0a" stroke-width="4"/><path d="M12 10V7l3-5M12 16v5l-3 4" stroke="#e00" stroke-width="1.500"/><path d="M16 17l-4 8" stroke="#0a9a0a" stroke-width="3"/><path d="M1 4h8M17 4h8M1 23h8M17 23h8M7 1.500L10 4L7 6.500M19 1.500L16 4L19 6.500M7 20.500l3 2.500-3 2.500M19 20.500l-3 2.500 3 2.500" stroke="#222" stroke-width="1.300"/>`),
nobug:S26(`<g transform="translate(3 -2)">${bug('#111')}</g><circle cx="10" cy="16" r="7.500" stroke="#d04040" stroke-width="3" fill="#fff" fill-opacity=".15"/><path d="M5 21.500L15 10.500" stroke="#d04040" stroke-width="3"/>`),
grid:S26([4,10,16,22].map(y=>[4,10,16,22].map(x=>`<circle cx="${x}" cy="${y}" r="1.400" fill="#333"/>`).join('')).join('')),
polar:S26(`<path d="M3 3V23H24M1 6l2-4 2 4M20 21l4 2-4 2M3 23L23 3" stroke="#222" stroke-width="1.300"/><path d="M3 23L23 3" stroke="#666"/><circle cx="23.500" cy="2.500" r="2.200" fill="#f00"/><text x="7" y="10" font-size="12" font-weight="bold" fill="#333">r</text><text x="16" y="19" font-size="12" font-weight="bold" font-style="italic" fill="#555">θ</text>`),
inch:S26(`<text x="13" y="13" font-size="13" text-anchor="middle" fill="#444" stroke="#444" stroke-width=".4">in</text><path d="M2 19H24M6 16.500L2 19L6 21.500M20 16.500L24 19L20 21.500" stroke="#222" stroke-width="1.200"/>`),
mm:S26(`<text x="13" y="13" font-size="12.500" text-anchor="middle" fill="#444" stroke="#444" stroke-width=".4" textLength="23">mm</text><path d="M2 19H24M6 16.500L2 19L6 21.500M20 16.500L24 19L20 21.500" stroke="#222" stroke-width="1.200"/>`),
cross:S26(`<path d="M1 7H25M9 0V24" stroke="#999" stroke-width="1.800"/><path d="M4 7H14M9 2V12" stroke="#333" stroke-width="1.800"/><path d="M13 10V22L16 19L18.500 24L20.500 23L18 18H22Z" fill="#fff" stroke="#555"/>`),
rats:S26(`<rect width="26" height="26" rx="2" fill="#c9c9c8"/><path d="M5 5L19 8L7 20M5 5L21 18" stroke="#fff" stroke-width="2"/><g fill="#e8e800" stroke="#777"><circle cx="5" cy="5" r="2.800"/><circle cx="20" cy="7" r="2.800"/><circle cx="7" cy="20" r="2.800"/><circle cx="20.500" cy="18" r="2.800"/></g>`),
z1:S26(pad('#4ea64e','#fff','<path d="M9 10L16 9L25 25" stroke="#1a7a1a" stroke-width="6.500"/><circle cx="9" cy="10" r="7" fill="#1a7a1a"/>')),
z2:S26(pad('#fff','#14801a')),z3:S26(pad('#fff','#14801a','<circle cx="9" cy="10" r="7" stroke="#14801a"/><path d="M15 4h4l7 12M13 16l6 9" stroke="#14801a"/>')),
padsk:S26(`<circle cx="13" cy="13" r="8.500" fill="#fff" stroke="#1a8a1a" stroke-width="1.600"/><path d="M13 4A9 9 0 0 0 7 20L10 16A5 5 0 0 1 17 10L20 7A9 9 0 0 0 13 4Z" fill="#4ea64e"/><circle cx="13" cy="13" r="4" stroke="#1a8a1a" stroke-width="2"/>`+slash),
viask:S26(`<path d="M1 1L10 10" stroke="#0aa00a" stroke-width="5"/><path d="M16 16L25 25" stroke="#e00000" stroke-width="5"/><circle cx="13" cy="13" r="6.500" fill="#aaa" stroke="#444" stroke-width="1.400"/><path d="M13 13l5 0a5 5 0 0 1-5 4z" fill="#e8c800"/>`+slash),
trksk:S26(`<path d="M10.500 0V12" stroke="#e00000" stroke-width="6"/><path d="M0 16H8" stroke="#0a8a0a" stroke-width="6"/><path d="M8 13H26M8 18H26" stroke="#0a8a0a"/><path d="M8 12V26M13 12V26" stroke="#e00000"/>`+slash),
hc:S26(`<path d="M3 2l5 10h7l3 4 5 8" stroke="#0a8a0a" stroke-width="3"/><path d="M9 2l3 5h8" stroke="#e00000" stroke-width="3"/><path d="M1 18h6" stroke="#e00000" stroke-width="3"/><path d="M8 18h6l4 7M16 8h9" stroke="#999" stroke-width="3"/>`+slash),
lay:S26([['#a000a0',17],['#0a9a2a',12],['#e80000',7],['#00a0a0',2]].map(([c,y])=>`<path d="M9 ${y}H25L16 ${y+7}H1Z" fill="${c}" stroke="#555" stroke-width=".8"/>`).join('')),
meander:S26(`<path d="M0 8H4Q5 8 5 12Q5 18 7.500 18T10 12V5Q10 1 12 1T14 5V14Q14 18 16 18T18 14V5Q18 1 20 1T22 6Q22 8 26 8" stroke="#c41c1c" stroke-width="2"/><path d="M1 13V25M25 13V25M1 23H25M5 20.500L1.500 23L5 25.500M21 20.500l3.500 2.500-3.500 2.500" stroke="#222" stroke-width="1.200"/>`),
arrow:S26(`<path d="M7 4V20L11 16.500L14 23L17 21.500L14 15.500H19Z" fill="#fff" stroke="#555" stroke-width="1.300"/>`),
hl:S26(`<path d="M18.500 1V25M1 18H25" stroke="#bbb" stroke-width="2.400"/><path d="M9.500 1V25" stroke="#c00" stroke-width="3"/><path d="M1 9.500H25" stroke="#55a855" stroke-width="3"/><circle cx="9.500" cy="9.500" r="3.800" fill="#a88a20" stroke="#7a6a2a"/>`),
locr:S26(`<rect width="26" height="26" rx="2" fill="#c9c9c8"/><path d="M10 9L25 3M10 9L23 20M10 9L2 24M10 9L6 1" stroke="#fff" stroke-width="1.800"/><circle cx="10" cy="9" r="2.600" fill="#ccc" stroke="#333"/>`),
modr:S26(`<rect x="2" y="6" width="22" height="15" fill="#e6e6e6" stroke="#444"/>`+[3.500,11,18.500].map(x=>`<rect x="${x}" y="3" width="4" height="6" fill="#0acc2c" stroke="#033" stroke-width=".8"/><rect x="${x}" y="18" width="4" height="6" fill="#0acc2c" stroke="#033" stroke-width=".8"/>`).join('')),
trk:S26(`<path d="M4 3L8 13H19L23 23" stroke="#0a8a0a" stroke-width="2.200"/>`),
via:S26(`<circle cx="13" cy="13" r="9" fill="#a5a5a5"/><circle cx="13" cy="13" r="6" fill="#c8c400" stroke="#6a6400" stroke-width="1.400"/>`),
zone:S26(pad('#55ac55','#8a8a8a','<path d="M9 10L16 9L25 25" stroke="#fff" stroke-width="7"/><circle cx="9" cy="10" r="7" fill="#fff"/>')),
keep:S26(`<rect x="2" y="2" width="22" height="22" stroke="#0a8a0a" stroke-width="4" stroke-dasharray="1.500 1.500"/><rect x=".7" y=".7" width="24.600" height="24.600" stroke="#0a8a0a" stroke-width="1.400"/><circle cx="13" cy="13" r="6.500" fill="#fff" stroke="#e04040" stroke-width="3"/><path d="M8.500 17.500L17.500 8.500" stroke="#e04040" stroke-width="3"/>`),
pline:S26(`<path d="M4 4L18 5L22 18L4 22" stroke="#0000c8" stroke-width="2"/>`+dot(4,4)+dot(18,5)+dot(22,18)+dot(4,22)),
circ:S26(`<circle cx="13" cy="13" r="11" stroke="#0000c8" stroke-width="1.800"/>`+dot(13,13)+dot(20.500,5.500)),
arc:S26(`<path d="M4 4Q20 5 22 22" stroke="#0000c8" stroke-width="2"/>`+dot(4,4)+dot(22,22)+dot(4,22)),
poly:S26(`<path d="M4 4L18 6L22 18L4 22Z" fill="#8a8af0" stroke="#0000c8" stroke-width="1.800"/>`),
text:S26(`<text x="13" y="23" font-size="29" font-family="Liberation Serif" text-anchor="middle" fill="#333" stroke="#333" stroke-width=".9">T</text>`),
dim:S26(`<path d="M2 8V26M24 8V26" stroke="#0000c8" stroke-width="1.800"/><path d="M2 16H24M7 13L3 16L7 19M19 13l4 3-4 3" stroke="#222" stroke-width="1.300"/><text x="13" y="10" font-size="12" text-anchor="middle" fill="#222">N</text>`),
target:S26(ori(13,13,1)),
trash:S26(`<path d="M4 9H22L19 25H7Z" fill="#eee" stroke="#333" stroke-width="1.200"/><path d="M3 8.500H23" stroke="#444" stroke-width="2.400"/><path d="M8 9l1 16M13 9v16M18 9l-1 16M5 13h16M5.500 17h15M6 21h14" stroke="#333"/><path d="M6 5q2-4 4-1q3-4 5 0q4-2 5 2z" fill="#ddd" stroke="#bbb"/>`),
orig:S26(`<path d="M3 1V25M1 22H25M1 5l2-4 2 4M21 20l4 2-4 2" stroke="#444" stroke-width="1.200"/>`+ori(15,11,.78)),
gorig:S26([3,9,15,21].map(y=>[4,10,16,22].map(x=>`<circle cx="${x}" cy="${y}" r="1.300" fill="#333"/>`).join('')).join('')+'<path d="M5 15.500H15M10 10.500V20.500" stroke="#d00" stroke-width="2"/>'),
meas:S26(`<path d="M14 1L18 5L10 12M14 1L3 11L1 16L5 17L16 8M8 8L25 21M6 12L24 25M10 16L16 13M4 13l6 3M15 14l-4 4M19 17l-4 4M22 20l-3 3" stroke="#333" stroke-width="1.200"/>`),
no:svg(21,21,stop('#cf1f1f','#a00')),yes:svg(21,21,go('#5fb70c','#3f7a06')),gno:svg(21,21,stop('#b9b3b3','#aaa')),gok:svg(21,21,go('#c6cac2','#b8bab4')),
quest:svg(44,46,`<ellipse cx="22" cy="39" rx="15" ry="6" fill="#d8d7d5"/><path d="M22 2L42 22.500L22 43L2 22.500Z" fill="#fff" stroke="#4a76ae" stroke-width="1.200" stroke-linejoin="round"/><path d="M22 5L39 22.500L22 40L5 22.500Z" fill="#5f8fc8"/><path d="M22 5L39 22.500Q22 18 5 22.500Z" fill="#8fb2dc"/><text x="22" y="31" font-size="23" font-weight="bold" fill="#fff" text-anchor="middle">?</text>`),
prog:`<svg class="block w-full h-full" viewBox="0 0 224 26" fill="none"><defs><linearGradient id="pg" x2="0" y2="1"><stop stop-color="#a3c2ec"/><stop offset="1" stop-color="#84a6d6"/></linearGradient></defs><rect width="224" height="26" fill="url(#pg)"/>`+[-20,20,60,100,140,180,220].map(x=>`<path d="M${x+14} 0h20L${x+14} 26H${x-6}Z" fill="#7d9ecd" fill-opacity=".6"/>`).join('')+`<rect x=".5" y=".5" width="223" height="25" stroke="#6c8fc4"/></svg>`,
lx:svg(28,22,'<path d="M1 20Q8 12 15 1Q17 8 27 21Q18 16 14 8Q11 15 9 21Q10 14 8 14Q4 17 1 20Z" fill="#c9c9c9"/>'),
fm:svg(17,22,'<rect x="1" y="1" width="15" height="20" rx="2" fill="#2b2b2b" stroke="#444"/><path d="M4 9h6l2 2h2v5H4z" fill="#eee"/>'),
globe:svg(20,22,'<circle cx="10" cy="11" r="9.500" fill="#5c93cf"/><path d="M4 4q6 2 4 8t4 8M10 2q8 4 6 12" stroke="#a9cdf0" stroke-width="3"/>'),
wins:svg(20,20,'<rect x="1" y="1" width="13" height="14" fill="#e8e8e8" stroke="#3a66a8"/><rect x="5" y="5" width="14" height="14" fill="#f4f4f4" stroke="#999"/>'),
desk:svg(17,19,'<rect y="1" width="17" height="7" fill="#1a6a1a"/><path d="M2 4h13v14H2z" fill="#a7bfe4" stroke="#fff"/><path d="M5 8h7v9H5z" stroke="#fff"/><path d="M8 14h3" stroke="#fff" stroke-width="3"/>'),
term:svg(20,20,'<rect x="1" y="1" width="17" height="13" fill="#26282a" stroke="#777"/><path d="M2 2h15L5 13H2z" fill="#555"/><path d="M6 17h8M8 14v3" stroke="#aaa" stroke-width="2"/>'),
win:svg(20,20,'<path d="M4 4h13v14H2V6z" fill="#999"/><path d="M2 4h14v4H2z" fill="#566"/>'),
graph:svg(37,24,'<rect width="37" height="24" fill="#000"/><path d="M0 23.500h37M1 23v-2M6 23v-1M12 23v-2M18 23v-2M24 23v-1M31 23v-3" stroke="#0a7a0a"/>'),
spk:svg(14,20,'<path d="M1 7h4l5-5v16l-5-5H1z" fill="#111"/><path d="M12 6q2 4 0 8" stroke="#111"/>'),
mon:svg(22,22,'<rect x="1" y="2" width="15" height="11" fill="#1d2a44" stroke="#999"/><path d="M2 18h13" stroke="#bbb" stroke-width="3"/><rect x="15" y="1" width="6" height="20" fill="#1fdf1f"/>'),
clip:svg(22,22,'<rect x="1" y="2" width="14" height="18" rx="1" fill="#b08a5e"/><rect x="5" y="0" width="6" height="4" fill="#999"/><rect x="11" y="8" width="10" height="13" fill="#eee" stroke="#999"/><path d="M13 12h6M13 15h6M13 18h4" stroke="#888"/>'),
lock:svg(20,22,'<rect x="1" y="1" width="18" height="14" rx="1" fill="#6a6180" stroke="#aaa"/><rect x="7" y="7" width="6" height="6" fill="#e9b93a"/><path d="M8 7V4h4v3" stroke="#ddd"/><path d="M10 15v3M5 19.500h10" stroke="#ccc" stroke-width="3"/>'),
power:svg(17,18,'<rect width="17" height="18" rx="2" fill="#e02a2a"/><path d="M5.500 5.500a4.500 4.500 0 1 0 6 0M8.500 3v6" stroke="#fff" stroke-width="1.800"/>')
};
const $=id=>document.getElementById(id);
// Project tree
$('tree').innerHTML=[['book','EEZ DIB BP3C r3B2.pro'],['folder','EEZ DIB BP3C r3B2.pretty'],['folder','shapes3D'],['pcb','EEZ DIB BP3C r3B2.kicad_pcb'],['net','EEZ DIB BP3C r3B2.net'],['sch','EEZ DIB BP3C r3B2.sch'],['lib','EEZ DIB BP3C r3B2-cache.lib'],['lib','EEZ_DIB_BP3C_r3B2-eagle-import.lib'],['sch','EEZ_DIB_BP3C_r3B2_1.sch'],['sch','EEZ_DIB_BP3C_r3B2_2.sch'],['wks','empty.kicad_wks']].map(([i,t],n)=>
 n==0?`<div class="h-[28px] flex items-center pl-[8px]"><svg class="w-[12px] h-[10px] mr-[13px]" viewBox="0 0 12 10"><path d="M1 2H11L6 8Z" fill="#fff" stroke="#111" stroke-width="1.200"/></svg><i data-i="${i}" class="block w-[26px] h-[26px]"></i><b class="ml-[4px]">${t}</b></div>`
 :`<div class="h-[28px] flex items-center pl-[26px]"><svg class="w-[8px] h-[12px] mr-[14px]" viewBox="0 0 8 12">${n==1?'<path d="M1.500 1V11L7 6Z" fill="#fff" stroke="#111" stroke-width="1.200"/>':''}</svg><i data-i="${i}" class="block w-[26px] h-[26px]"></i><div class="${n==3?'bg-linear-to-b from-[#80a4d6] to-[#668dc2] text-white h-[28px] ml-px pl-[3px] pr-[3px] pt-[5px]':'pl-[4px]'}">${t}</div></div>`).join('');
$('tasks').innerHTML=[['term','[mistery@...'],['term','[mistery@...'],['term','mistery@...'],['term','mistery@...'],['term','[mistery@...'],['kicad','KiCad 5.0....'],['pcb','[Pcbnew — ...'],['pcb','[DRC Control]'],['win','[Checking Z...']].map(([i,t])=>`<div class="w-[115px] h-[24px] border-2 border-[#8c8a88] rounded-[5px] bg-linear-to-b from-white to-[#e6e5e3] flex items-center gap-px pl-[2px] text-[#111]"><i data-i="${i}" class="block w-[19px] h-[20px] shrink-0"></i><span>${t}</span></div>`).join('');
const bar=(l,h)=>l.split(' ').map(n=>n=='|'?(h?'<i class="block w-px h-[24px] mx-[4px] bg-[#c5c4c1]"></i>':'<i class="block h-px w-[24px] my-[4px] bg-[#b5b4b1] shrink-0"></i>'):n[0]=='*'?`<div class="w-[32px] h-[32px] my-px p-[2px] border border-[#86a9d9] bg-[#dae5f4] shrink-0"><i data-i="${n.slice(1)}" class="block w-[26px] h-[26px]"></i></div>`:`<i data-i="${n}" class="block w-[26px] h-[26px] m-[4px] shrink-0"></i>`).join('');
$('tb1').innerHTML=bar('save | page | chip libfind | undo redo | print plot | redraw zin zout zfit zsel | find | net bug |',1);
$('tbl').innerHTML=bar('nobug *grid polar inch *mm cross | *rats | *z1 z2 z3 | padsk viask trksk hc | *lay meander |');
$('tbr').innerHTML=bar('*arrow | hl locr | modr trk via zone keep | pline circ arc poly text | dim target | trash | orig gorig meas');
$('layers').innerHTML=[['Top','#b6afae'],['Bottom','#b9bcb9'],['F.Adhes','#b7b2b6'],['B.Adhes','#a9a8aa'],['F.Paste','#b6afae'],['B.Paste','#c8cdcd'],['F.SilkS','#bec0be'],['B.SilkS','#b7b2b6'],['F.Mask','#b7b2b6'],['B.Mask','#c8c7c1'],['Dwgs.User','#e3e2e1'],['Cmts.User','#a9a8aa'],['Eco1.User','#b9bcb9'],['Eco2.User','#dad9d0'],['Edge.Cuts','#dad9d0'],['Margin','#c0babf'],['F.CrtYd','#e3e2e1'],['B.CrtYd','#cdcdcb'],['F.Fab','#cdcdcb'],['B.Fab','#a9a8aa']].map(([t,c],n)=>`<div class="h-[22px] flex items-center"><svg class="w-[6px] h-[12px] -ml-[3px] mr-[3px]" viewBox="0 0 6 12">${n?'':'<path d="M0 1V11L6 6Z" fill="#bbb9b7"/>'}</svg><i class="block w-[16px] h-[13px] border border-[#aaa8a6]" style="background:${c}"></i><svg class="w-[12px] h-[13px] ml-[6px] mr-[6px]" viewBox="0 0 12 13"><rect x=".5" y="1.500" width="11" height="11" fill="none" stroke="#9d9b99"/><path d="M2.500 6L5 10L10 2" fill="none" stroke="#777573" stroke-width="1.800"/></svg><span>${t}</span></div>`).join('');

// Board canvas
let b='';
const L=(d,c,w=1)=>b+=`<path d="${d}" fill="none" stroke="${c}" stroke-width="${w}"/>`;
// A dimension value w pixels long: the number, then its unit in the last 28
const T=(x,y,w,s,r,clip)=>{const [n,u]=s.split(' '),a=`y="${y}" lengthAdjust="spacingAndGlyphs"`;b+=`<g font-family="DejaVu Sans Mono" font-size="18.500" fill="#c2c2c2" ${clip?'clip-path="url(#edge)"':''} ${r?`transform="rotate(-90 ${x} ${y})"`:''}><text x="${x}" ${a} textLength="${u?w-38:w}">${n}</text>${u?`<text x="${x+w-28}" ${a} textLength="28">${u}</text>`:''}</g>`;};
const C='#c2c2c2',Gn='#008400',R='#840000',Y='#c2c200';
b+='<defs><clipPath id="edge"><path d="M1636 121H1951V976H1636Z"/></clipPath><pattern id="ht" width="5" height="5" patternUnits="userSpaceOnUse"><path d="M0 5L5 0" stroke="#840000" stroke-width="1.300"/><path d="M2 4l2-2" stroke="#006000"/></pattern></defs>';
b+='<path d="M1944 179.500H2805.500V858H2799V185H1951V818H1944Z" fill="url(#ht)"/>';
L('M1943.500 300V179.500H2800M1945.500 500V818H1952',R);L('M2805.500 181V858',Gn);
b+=`<path d="M1951 236Q1951 225 1962 225H2043V197Q2043 186 2054 186H2788Q2800 186 2800 197V824H1963L1957 818H1951Z" fill="${R}"/>`;
b+='<path d="M1950 186H2041V222H1962L1950 228Z" fill="#000"/>';
L('M1949.500 873V234Q1949.500 223.500 1960 223.500H2042.500V194Q2042.500 184.500 2052 184.500H2791Q2801.500 184.500 2801.500 195V872Q2801.500 881.500 2791 881.500H1959Q1949.500 881.500 1949.500 873',Y,1.3);
L('M1950.500 385V790','#008484');
// Copper of the left connector
b+=`<path d="M1957 448L1968 440H2008L2010 480V600L2008 760H1975L1957 745Z" fill="${Gn}"/><path d="M1968 440L2000 440V456H1980L1971 475L1962 460Z" fill="#000"/>`;
L('M2044 286L1956 375V427L1971 444','#000',2);L('M2044 286L1956 375',Gn,.8);
L('M2044 308L1971 381V432H1998M2044 314L2009 349V357M2009 376V400L1998 408',Gn,1.4);L('M2044 337L2023 357V405','#000',1.6);L('M2042 254.500H2068','#005000',1);
L('M1995 358.500H2009M2044 358.500H2034V378H2044','#840084');
for(let k=0;k<9;k++){const y=384+k*6.5,x=2010+k*3.4;L(`M2044 ${y}L${x} ${y+(2044-x)}V${636-k*5}`,k%3==2?'#000':Gn,k%3==2?2:1.5);}
b+='<path d="M2006 450L2030 405V425L2012 450V560H2006Z" fill="#008400"/>';
for(let k=0;k<10;k++)L(`M2044 ${500+k*8}L${2016+k*1.500} ${530+k*7}`,k%2?Gn:'#000',1.3);
for(let k=0;k<11;k++)L(`M${2012+k*2.900} 560V${625+k*6}L${2000} ${650+k*9}`,k%3==1?'#000':Gn,1.2);
L('M2040 560V695L2010 725M2035 560V680L2012 712',Gn,1.6);
L('M1955.500 445V778L1968 791.500H2044M1960.500 740V775L1971 786.500H2044',Gn,1.5);
L('M1958 445V740L1975 752M1963 470V730','#840000',3);L('M1955 480V745','#000',1.2);L('M1966 490V735L1976 745H2006',R,1.4);L('M1961 560V722M1965 565V730','#888',1);
const p0=397,st=19.68;
for(let k=0;k<20;k++){const y=p0+k*st;L(`M1905 ${y}H1950`,'#848484',4);if(k)L(`M1966 ${y}H2002`,'#848484',3.500);else L('M1990 397H1996','#848484',3);
 if(k>6&&k<18)L(`M1981 ${y-6}L1987 ${y-11}H2004L2014 ${y-20}`,R,3.500);}
const P=(x,y)=>b+=`<circle cx="${x}" cy="${y}" r="8" fill="#000"/><circle cx="${x}" cy="${y}" r="5.700" fill="#000" stroke="${Y}" stroke-width="3.200"/><circle cx="${x}" cy="${y}" r="6.500" fill="none" stroke="#840084" stroke-width=".5" stroke-dasharray="1.500 5"/>`;
for(let k=0;k<20;k++){const y=p0+k*st;if(k==19)b+=`<rect x="1970.500" y="${y-7}" width="15" height="15" fill="${Y}"/><circle cx="1978" cy="${y}" r="4" fill="#000"/>`;else P(1978,y);P(1997.500,y);}
const V=(x,y)=>b+=`<circle cx="${x}" cy="${y}" r="3" fill="${C}"/><circle cx="${x}" cy="${y}" r="1.200" fill="#8f7928"/>`;
[[1964,458],[1971,466],[2034,407],[2027,443],[2035,458],[2034,473],[2043,480],[2014,646],[2014,666],[2014,687],[2014,708],[2006,741],[1964,817],[1984,817],[2003.5,817],[2023,817],[2043,817],[2157,222],[2380,222],[2433,222],[2657,222],[2718,262]].forEach(a=>V(...a));
L('M2014 722h10v11h-10zM2014 742h10v11h-10z','#840084');
b+='<text transform="translate(2017 328) rotate(-45)" font-family="DejaVu Sans Mono" font-size="13" fill="#c2c2c2">+5V</text>';
L('M2123 225L2132 234.500H2662L2670 225','#000',3.5);L('M2131 232.500H2662','#000',5);L('M2123 226L2132 232.500H2662L2670 226',R,1.5);
L('M2064 266L2076 254.500H2694L2712 275M2417 244L2427 251H2692L2716 266',Gn,1.6);
L('M2152 230v6M2389 230v6M2426 230v6M2664 230v6M2488 234l4-3 6 3M2530 234l6-3M2562 234l3-3h4M2584 234l5-3 5 3','#008484',1.4);L('M2478 251h58','#008484');
[2122.500,2142,2397,2417,2672,2692].forEach(x=>[222.500,242.500,262].forEach(y=>P(x,y)));
b+='<g font-family="DejaVu Sans Mono" font-size="14" fill="#c8b0b0"><text x="2258" y="266" textLength="23">+5V</text><text x="2533" y="266" textLength="23">+5V</text></g>';
[[1976.500,250],[1976.500,854],[2774,250],[2774,854]].forEach(([x,y])=>b+=`<circle cx="${x}" cy="${y}" r="22.500" fill="#000"/><circle cx="${x}" cy="${y}" r="21" fill="${C}"/><circle cx="${x}" cy="${y}" r="12.500" fill="#8f7928"/><text x="${x}" y="${y+2.500}" font-size="7" fill="#555" text-anchor="middle" textLength="36" font-family="DejaVu Sans Mono">HOLE_MOUN</text>`);
// Dimension lines
const Lf=(x,y)=>`M${x+10} ${y-5}L${x+1} ${y}L${x+10} ${y+5}`,Rt=(x,y)=>`M${x-10} ${y-5}L${x-1} ${y}L${x-10} ${y+5}`;
L('M1949 169H2042'+Lf(1949,169)+Rt(2042,169)+'M1949 163V195M2042 163V185M1939 202V232M1949 202V232',C,2);
L('M1846 268H1939'+Lf(1846,268)+Rt(1939,268)+'M1846 263V303M1939 263V303M1951 328H1846'+Lf(1846,328)+'M1846 323V381M1951 372H1866'+Lf(1866,372)+'M1866 366V411',C,2);
L('M1895 184V881M1889.500 194L1895 184L1900.500 194M1889.500 871L1895 881L1900.500 871M1889 184H1951M1889 881H1951',C,2);
L('M1949 818V836M1949 831.500H2045'+Lf(1949,831.5)+'M1949 883V913M2802 883V913',C,2);L('M1949 908.500H2802',C,3);L(Lf(1949,908.5)+Rt(2802,908.5),C,2);
L('M2114 866H2662'+Lf(2114,866)+Rt(2388,866)+Lf(2388,866)+Rt(2662,866)+'M2114 858V871M2388 858V871M2662 858V871M2642 858V904M2636.500 894L2642 904L2647.500 894M2636 904H2680',C,2);
L('M2248 858.500H2672',R,2);
b+='<path d="M1940 202h9v9h-9z" fill="none" stroke="#c2c2c2" stroke-width="3" stroke-dasharray="2 2"/>';
T(1945,159,100,'12.000 mm');T(1900,198,88,'1.300 mm');T(1843,258,100,'12.000 mm');T(1862,318,100,'17.040 mm',0,1);T(1871,362,100,'14.500 mm',0,1);T(1884,583,99,'90.000 mm',1);
T(1997,853,87,'2.400 mm');T(2200,888,101,'35.500 mm');T(2475,888,101,'35.500 mm');T(2319,931,111,'110.000 mm');T(2632,884,33,'18.',1);
$('board').innerHTML=b;

document.querySelectorAll('[data-i]').forEach(e=>e.innerHTML=I[e.dataset.i]||'');
</script>
</body>
</html>
